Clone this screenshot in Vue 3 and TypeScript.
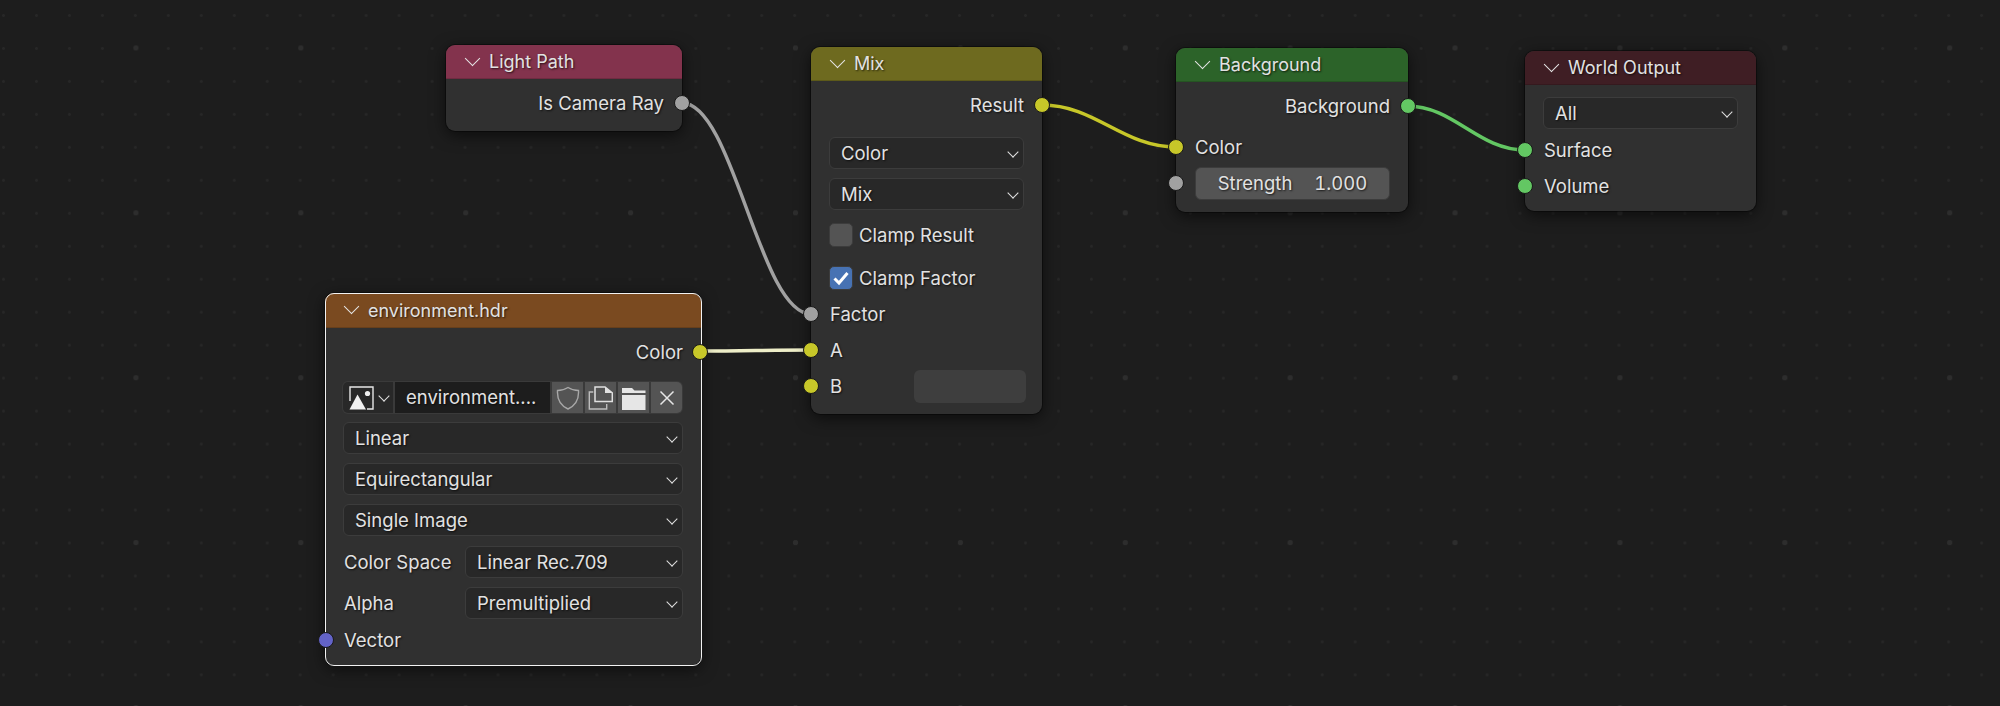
<template>
  <div class="editor">
    <svg class="wires" width="2000" height="706">
      <path
        v-for="wire in wires"
        :key="wire.d"
        :d="wire.d"
        :stroke="wire.color"
        stroke-width="3.5"
        fill="none"
      />
    </svg>

    <!-- Light Path -->
    <div class="node light-path">
      <div class="header">Light Path</div>
      <div class="row out">Is Camera Ray<span class="socket gray"></span></div>
    </div>

    <!-- Image texture -->
    <div class="node env selected">
      <div class="header">environment.hdr</div>
      <div class="row out">Color<span class="socket yellow"></span></div>
      <div class="image-row">
        <div class="image-pick">
          <svg width="25" height="24" viewBox="0 0 25 24">
            <path d="M1 15V1H24V23H18" stroke="#e6e6e6" stroke-width="1.4" fill="none" />
            <path d="M0.5 23.5L8.5 8.5L17 23.5Z" fill="#f0f0f0" />
            <circle cx="18.5" cy="7.5" r="2.6" fill="#f0f0f0" />
          </svg>
          <span class="chev"></span>
        </div>
        <div class="image-name">environment....</div>
        <button class="image-btn">
          <svg width="24" height="24" viewBox="0 0 24 24">
            <path d="M12 1.5C15 3.5 18.5 4.5 22.5 4.5C23 12.5 19.5 19.5 12 23C4.5 19.5 1 12.5 1.5 4.5C5.5 4.5 9 3.5 12 1.5Z" stroke="#a8a8a8" stroke-width="1.4" fill="none" />
          </svg>
        </button>
        <button class="image-btn">
          <svg width="25" height="25" viewBox="0 0 25 25">
            <path d="M7 16.5V2H17L24.3 8V16.5Z" stroke="#e0e0e0" stroke-width="1.5" fill="none" />
            <path d="M17 2V8H24.3Z" fill="#e0e0e0" />
            <path d="M5.3 7H1.3V24H18.7V19" stroke="#bdbdbd" stroke-width="1.4" fill="none" />
          </svg>
        </button>
        <button class="image-btn">
          <svg width="25" height="24" viewBox="0 0 25 24">
            <path d="M1 2H11L13.5 4.5H24.5V7H1Z" fill="#e6e6e6" />
            <path d="M1 9H24.5V24H1Z" fill="#e6e6e6" />
          </svg>
        </button>
        <button class="image-btn">
          <svg width="16" height="16" viewBox="0 0 16 16">
            <path d="M1.5 1.5L14.5 14.5M14.5 1.5L1.5 14.5" stroke="#e6e6e6" stroke-width="1.5" fill="none" />
          </svg>
        </button>
      </div>
      <div class="select-stack">
        <div class="select">Linear</div>
        <div class="select">Equirectangular</div>
        <div class="select">Single Image</div>
        <div class="prop first">
          <span class="prop-label">Color Space</span>
          <div class="select">Linear Rec.709</div>
        </div>
        <div class="prop">
          <span class="prop-label">Alpha</span>
          <div class="select">Premultiplied</div>
        </div>
      </div>
      <div class="row in vector"><span class="socket blue"></span>Vector</div>
    </div>

    <!-- Mix -->
    <div class="node mix">
      <div class="header">Mix</div>
      <div class="row out">Result<span class="socket yellow"></span></div>
      <div class="select-stack mix-selects">
        <div class="select">Color</div>
        <div class="select">Mix</div>
      </div>
      <div class="check-row"><span class="check"></span>Clamp Result</div>
      <div class="check-row">
        <span class="check on">
          <svg width="18" height="16" viewBox="0 0 18 16">
            <path d="M2.5 8.5L7 13L15.5 3" stroke="#fff" stroke-width="3" fill="none" />
          </svg>
        </span>
        Clamp Factor
      </div>
      <div class="mix-inputs">
        <div class="row in"><span class="socket gray"></span>Factor</div>
        <div class="row in"><span class="socket yellow"></span>A</div>
        <div class="row in">
          <span class="socket yellow"></span>B
          <div class="swatch"></div>
        </div>
      </div>
    </div>

    <!-- Background -->
    <div class="node background">
      <div class="header">Background</div>
      <div class="row out">Background<span class="socket green"></span></div>
      <div class="row in color-in"><span class="socket yellow"></span>Color</div>
      <div class="row in">
        <span class="socket gray"></span>
        <div class="field"><span>Strength</span><span class="value">1.000</span></div>
      </div>
    </div>

    <!-- World Output -->
    <div class="node world">
      <div class="header">World Output</div>
      <div class="select-stack world-select">
        <div class="select">All</div>
      </div>
      <div class="row in"><span class="socket green"></span>Surface</div>
      <div class="row in"><span class="socket green"></span>Volume</div>
    </div>
  </div>
</template>

<script setup lang="ts">
interface Wire {
  from: [number, number];
  to: [number, number];
  color: string;
}

const links: Wire[] = [
  { from: [682, 103], to: [811, 314], color: '#a1a1a1' },
  { from: [701, 351], to: [811, 350], color: '#eeeec8' },
  { from: [1042, 105], to: [1176, 147], color: '#c7c729' },
  { from: [1407, 106], to: [1525, 150], color: '#63c763' },
];

// same shape blender uses: horizontal handles at both ends
const wires = links.map((link) => {
  const [x1, y1] = link.from;
  const [x2, y2] = link.to;
  const h = (x2 - x1) * 0.4;
  return {
    d: `M${x1} ${y1}C${x1 + h} ${y1} ${x2 - h} ${y2} ${x2} ${y2}`,
    color: link.color,
  };
});
</script>

<style>
html,
body {
  margin: 0;
  background: #1d1d1d;
}
</style>

<style scoped>
.editor {
  position: relative;
  width: 2000px;
  height: 706px;
  overflow: hidden;
  font-family: Inter, "Liberation Sans", sans-serif;
  font-size: 18.5px;
  color: #e2e2e2;
  text-shadow: 1px 1px 2px rgba(0, 0, 0, 0.7);
  background-color: #1d1d1d;
  background-image:
    radial-gradient(circle at center, #2d2d2d 2.4px, transparent 3px),
    radial-gradient(circle at center, #272727 1px, transparent 1.8px);
  background-size: 164.9px 164.9px, 32.98px 32.98px;
  background-position: 53.5px -34.5px, -13px -1px;
}

.wires {
  position: absolute;
  left: 0;
  top: 0;
}

.node {
  position: absolute;
  box-sizing: border-box;
  background: #303030;
  border-radius: 9px;
  box-shadow: 0 4px 16px rgba(0, 0, 0, 0.6), 0 0 0 1px rgba(0, 0, 0, 0.35);
}

.node.selected::after {
  content: "";
  position: absolute;
  left: 0;
  top: 0;
  right: -1px;
  bottom: -1px;
  border: 1.5px solid #f2f2f2;
  border-radius: 9px;
  pointer-events: none;
}

.light-path { left: 446px; top: 45px; width: 236px; height: 86px; }
.env { left: 325px; top: 293px; width: 376px; height: 372px; }
.mix { left: 811px; top: 47px; width: 231px; height: 367px; }
.background { left: 1176px; top: 48px; width: 232px; height: 164px; }
.world { left: 1525px; top: 51px; width: 231px; height: 160px; }

.header {
  position: relative;
  box-sizing: border-box;
  height: 34px;
  padding-left: 43px;
  font-size: 18px;
  line-height: 34px;
  border-radius: 9px 9px 0 0;
  border-bottom: 1px solid rgba(0, 0, 0, 0.15);
}

.header::before {
  content: "";
  position: absolute;
  box-sizing: border-box;
  left: 21px;
  top: 8px;
  width: 11px;
  height: 11px;
  border-right: 1.5px solid #e6e6e6;
  border-bottom: 1.5px solid #e6e6e6;
  transform: rotate(45deg);
}

.light-path .header { background: #83334d; }
.env .header { background: #7a4a20; height: 35px; line-height: 35px; }
.mix .header { background: #6e6a1f; }
.background .header { background: #2c6329; }
.world .header { background: #3f1e24; }

.row {
  position: relative;
  display: flex;
  align-items: center;
  height: 36px;
}

.row.out {
  justify-content: flex-end;
  padding-right: 18px;
  margin-top: 6px;
}

.row.in {
  padding-left: 19px;
}

.socket {
  position: absolute;
  z-index: 1;
  top: 50%;
  width: 14px;
  height: 14px;
  margin-top: -8px;
  border: 1px solid #191919;
  border-radius: 50%;
}

.row.out .socket { right: -8px; }
.row.in .socket { left: -8px; }
.env .row.out .socket { right: -7px; }
.env .row.in .socket { left: -7px; }

.yellow { background: #c7c729; }
.gray { background: #a1a1a1; }
.green { background: #63c763; }
.blue { background: #6363c7; }

.select-stack {
  display: flex;
  flex-direction: column;
  gap: 9px;
  margin: 0 18px;
}

.select {
  position: relative;
  box-sizing: border-box;
  height: 32px;
  padding-left: 11px;
  line-height: 31px;
  background: #282828;
  border: 1px solid #3c3c3c;
  border-radius: 6px;
}

.select::after,
.chev {
  content: "";
  position: absolute;
  box-sizing: border-box;
  right: 6px;
  top: 10px;
  width: 8px;
  height: 8px;
  border-right: 1.5px solid #e0e0e0;
  border-bottom: 1.5px solid #e0e0e0;
  transform: rotate(45deg);
}

.prop {
  display: flex;
  align-items: center;
}

.prop.first {
  margin-top: 1px;
}

.prop .select {
  flex: 1;
}

.prop-label {
  width: 121px;
  padding-left: 1px;
}

.image-row {
  display: flex;
  gap: 2px;
  height: 33px;
  box-sizing: border-box;
  margin: 11px 18px 8px 17px;
  padding: 1px;
  background: #3a3a3a;
  border-radius: 6px;
}

.image-pick {
  position: relative;
  display: flex;
  align-items: center;
  width: 50px;
  padding-left: 6px;
  box-sizing: border-box;
  background: #282828;
  border-radius: 5px 0 0 5px;
}

.image-pick .chev {
  right: 5px;
  top: 10px;
}

.image-name {
  flex: 1;
  padding-left: 11px;
  line-height: 30px;
  background: #1d1d1d;
}

.image-btn {
  display: flex;
  align-items: center;
  justify-content: center;
  width: 31px;
  padding: 0;
  border: none;
  background: #545454;
}

.image-btn:last-child {
  border-radius: 0 5px 5px 0;
}

.vector {
  margin-top: 3px;
}

.mix-selects {
  margin-top: 14px;
  margin-bottom: 13px;
}

.check-row {
  display: flex;
  align-items: center;
  gap: 6px;
  height: 24px;
  margin: 0 18px 19px;
}

.check {
  display: flex;
  align-items: center;
  justify-content: center;
  width: 24px;
  height: 24px;
  box-sizing: border-box;
  background: #545454;
  border: 1px solid #3c3c3c;
  border-radius: 5px;
}

.check.on {
  background: #4772b3;
}

.mix-inputs {
  margin-top: -13px;
}

.swatch {
  position: absolute;
  right: 16px;
  top: 2px;
  width: 112px;
  height: 33px;
  background: #3e3e3e;
  border-radius: 6px;
}

.color-in {
  margin-top: 5px;
}

.field {
  flex: 1;
  display: flex;
  justify-content: center;
  gap: 22px;
  height: 33px;
  box-sizing: border-box;
  margin-right: 18px;
  line-height: 31px;
  background: #545454;
  border: 1px solid #3c3c3c;
  border-radius: 6px;
}

.value {
  font-variant-numeric: tabular-nums;
}

.world-select {
  margin-top: 12px;
  margin-bottom: 3px;
}
</style>
